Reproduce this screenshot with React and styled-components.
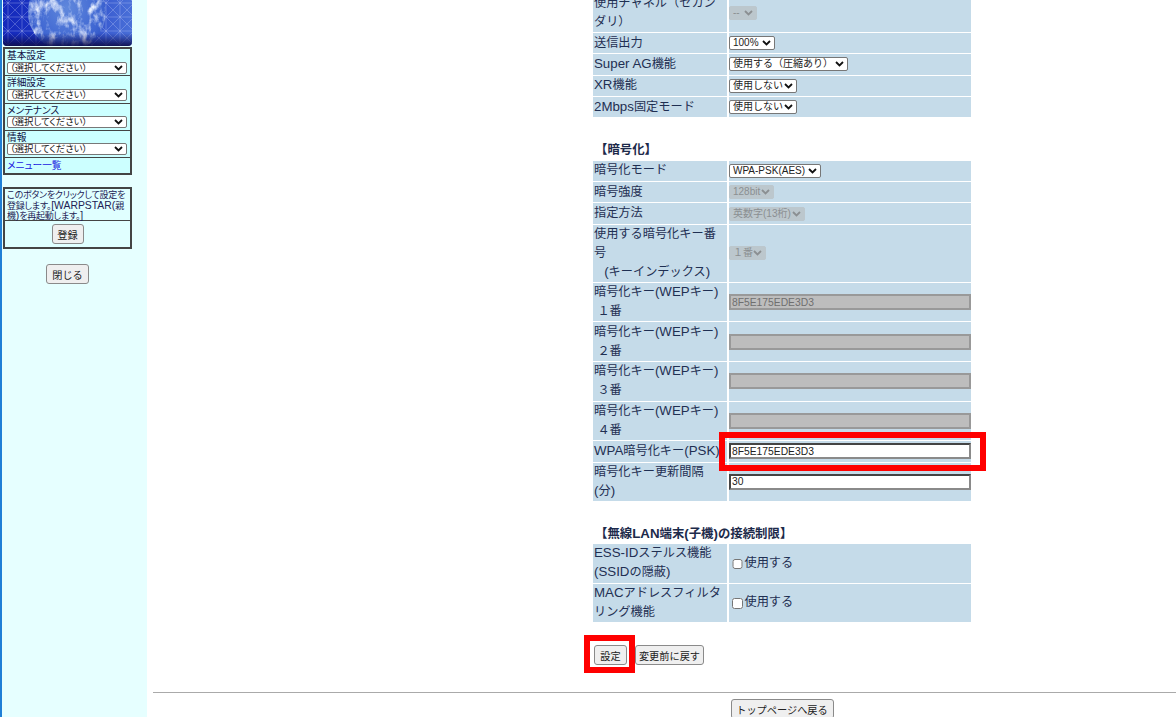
import React from "react";
import styled, { createGlobalStyle } from "styled-components";

const chevron = (c) =>
  `url("data:image/svg+xml,%3Csvg xmlns='http://www.w3.org/2000/svg' width='9' height='6' viewBox='0 0 9 6'%3E%3Cpath d='M1 1l3.5 3.5L8 1' fill='none' stroke='${c}' stroke-width='1.8'/%3E%3C/svg%3E")`;

const Global = createGlobalStyle`
  html, body { margin: 0; padding: 0; height: 717px; overflow: hidden; background: #fff; }
  #root { height: 717px; overflow: hidden; }
  * { box-sizing: border-box; }
  body { font-family: "Liberation Sans", "Noto Sans CJK JP", sans-serif; }
`;

const Page = styled.div`display: flex; height: 717px; overflow: hidden;`;
const Sidebar = styled.aside`
  width: 147px; flex: none; height: 717px; background: #e6ffff;
  border-left: 2px solid #1f7fd6; padding-left: 1px;
  display: flex; flex-direction: column; font-feature-settings: "palt";
`;
const Banner = styled.svg`display: block; width: 129px; height: 46px; flex: none;`;
const MenuBox = styled.div`
  width: 129px; margin-top: 1px; border: 2px solid #444; background: #444;
  display: flex; flex-direction: column; gap: 1px;
`;
const MenuRow = styled.div`
  background: #ccffff; height: ${p => p.$h || 26.33}px; padding: 2px 0 0 2px;
  font-size: 9.7px; line-height: 10.5px; color: #111144; white-space: nowrap;
  display: flex; flex-direction: column; align-items: flex-start;
`;
const MenuSelect = styled.select`
  appearance: none; width: 120px; height: 12px; font-size: 9.4px; padding: 0 0 0 2px; margin: 0;
  line-height: 10px; font-family: inherit; font-feature-settings: "palt"; color: #222; border: 1px solid #777; border-radius: 2px;
  background: #fff ${chevron("%23111")} no-repeat right 3px center;
`;
const MenuLink = styled.a`color: #2020e0; text-decoration: none; font-size: 9.7px; line-height: 11px;`;
const NoteBox = styled(MenuBox)`margin-top: 12px;`;
const NoteText = styled.div`
  background: #e0ffff; height: 31px; padding: 2px 0 0 2px; font-size: 9px; letter-spacing: -.25px;
  line-height: 9.5px; color: #222255; white-space: nowrap;
`;
const NoteLat = styled.span`font-size: 10.4px; letter-spacing: 0; line-height: 1;`;
const NoteAction = styled.div`
  background: #e0ffff; height: 26px; display: flex; justify-content: center; align-items: center;
`;
const CloseRow = styled.div`display: flex; justify-content: center; margin-top: 15px; width: 129px;`;

const Btn = styled.button`
  font-family: inherit; font-size: 10.2px; color: #222; height: 20px; width: ${p => p.$w}px;
  padding: 0; background: #efefef; border: 1.5px solid #8a8a8a; border-radius: 3px; flex: none; white-space: nowrap;
`;

const Main = styled.main`flex: 1; margin-left: 6px; min-width: 0;`;
const FormColumn = styled.div`margin-left: 438px; width: 382px; margin-top: -7.6px;`;
const Table = styled.table`
  border-collapse: separate; border-spacing: 2px 1px; width: 382px; table-layout: fixed;
  font-size: 12.2px; line-height: 19px; color: #1f2f52;
`;
const Label = styled.th`
  width: 134px; background: #c5dbe9; font-weight: 400; text-align: left; padding: 0 1px; vertical-align: middle;
`;
const Value = styled.td`
  background: #c5dbe9; padding: 0; height: ${p => p.$h || 20.33}px; vertical-align: middle; color: #222;
`;
const Lat = styled.span`font-size: 13.3px; line-height: 1;`;
const Sel = styled.select`
  appearance: none; display: block; width: ${p => p.$w}px; height: 14px; font-size: 10px; line-height: 12px; padding: 0 0 0 3px;
  font-family: inherit; color: #222; border: 1px solid #777; border-radius: 2px;
  background: #fff ${chevron("%23111")} no-repeat right 3px center;
  &:disabled {
    color: #8b8f92; border-color: #bcc7cd; opacity: 1;
    background: #bcc7cd ${chevron("%238b8f92")} no-repeat right 3px center;
  }
`;
const KeyInput = styled.input`
  display: block; width: 242px; height: 16px; padding: 0 1px; font-family: inherit; font-size: 10.3px;
  color: #222; background: #fff; border: 2px solid; border-color: #444 #8a8a8a #8a8a8a #444; outline: none; margin: 0;
  &:disabled { background: #bdbdbd; color: #6f6f6f; border-color: #999; opacity: 1; }
`;
const Highlight = styled.div`position: relative;`;
const RedFrame = styled.span`
  position: absolute; pointer-events: none; border: 6px solid #f00;
  left: ${p => p.$l}px; right: ${p => p.$r}px; top: ${p => p.$tp}px; bottom: ${p => p.$b}px;
`;
const Heading = styled.h3`
  margin: 23px 0 -.5px 4px; height: 19px; font-size: 12.4px; line-height: 19px; font-weight: 700; color: #1c2a4a;
`;
const CheckLabel = styled.label`
  display: flex; align-items: center; font-size: 12.2px; color: #1f2f52; margin-left: 1px;
`;
const Check = styled.input`
  width: 10.5px; height: 10.5px; margin: 1px 2px 0 2px;
`;
const Actions = styled.div`display: flex; margin: 22px 0 0 3px; gap: 8px; align-items: flex-start;`;
const Rule = styled.hr`border: 0; border-top: 1px solid #aaa; margin: 27px 0 0; height: 0;`;
const BackRow = styled.div`display: flex; justify-content: center; padding-left: 235px; margin-top: 6px;`;

const Globe = () => (
  <Banner viewBox="0 0 129 46" preserveAspectRatio="none">
    <defs>
      <linearGradient id="bg" x1="0" x2="1" y1="0" y2="0">
        <stop offset="0" stopColor="#1428bc" />
        <stop offset=".45" stopColor="#1f3cc4" />
        <stop offset="1" stopColor="#4a70d8" />
      </linearGradient>
      <linearGradient id="fade" x1="0" x2="0" y1="0" y2="1">
        <stop offset=".72" stopColor="#101060" stopOpacity="0" />
        <stop offset="1" stopColor="#0a0a48" stopOpacity=".92" />
      </linearGradient>
      <radialGradient id="earth" cx=".5" cy=".45" r=".55">
        <stop offset="0" stopColor="#6088dc" />
        <stop offset=".8" stopColor="#3f66d2" />
        <stop offset="1" stopColor="#3358c8" />
      </radialGradient>
      <pattern id="net" width="14" height="14" patternUnits="userSpaceOnUse" x="-2" y="-4">
        <path d="M0 0L14 14M14 0L0 14M7 0V14M0 7H14" stroke="#d8e2ff" strokeOpacity=".38" strokeWidth=".7" fill="none" />
      </pattern>
      <filter id="clouds" x="0" y="0" width="100%" height="100%">
        <feTurbulence type="fractalNoise" baseFrequency=".13 .08" numOctaves="4" seed="11" />
        <feColorMatrix type="matrix" values="0 0 0 0 .8  0 0 0 0 .86  0 0 0 0 1  2 2 0 0 -1.85" />
      </filter>
      <clipPath id="round"><path d="M0 0H129V42Q129 46 125 46H4Q0 46 0 42Z" /></clipPath>
      <clipPath id="disc"><circle cx="64" cy="12" r="39" /></clipPath>
    </defs>
    <g clipPath="url(#round)">
      <rect width="129" height="46" fill="url(#bg)" />
      <rect width="129" height="46" fill="url(#net)" />
      <circle cx="64" cy="12" r="39" fill="url(#earth)" />
      <g clipPath="url(#disc)"><rect width="129" height="46" filter="url(#clouds)" /></g>
      <rect width="129" height="46" fill="url(#fade)" />
    </g>
  </Banner>
);

const menus = ["基本設定", "詳細設定", "メンテナンス", "情報"];
const keys = ["１番", "２番", "３番", "４番"];

export default function App() {
  return (
    <Page>
      <Global />
      <Sidebar>
        <Globe />
        <MenuBox>
          {menus.map(m => (
            <MenuRow key={m}>
              {m}
              <MenuSelect><option>（選択してください）</option></MenuSelect>
            </MenuRow>
          ))}
          <MenuRow $h={15}><MenuLink href="#">メニュー一覧</MenuLink></MenuRow>
        </MenuBox>
        <NoteBox>
          <NoteText>このボタンをクリックして設定を<br />登録します。<NoteLat>[WARPSTAR(</NoteLat>親<br />機<NoteLat>)</NoteLat>を再起動します。<NoteLat>]</NoteLat></NoteText>
          <NoteAction><Btn $w={32}>登録</Btn></NoteAction>
        </NoteBox>
        <CloseRow><Btn $w={43}>閉じる</Btn></CloseRow>
      </Sidebar>
      <Main>
        <FormColumn>
          <Table>
            <tbody>
              <tr><Label>使用チャネル（セカンダリ）</Label><Value $h={38.6}><Sel $w={28} disabled><option>--</option></Sel></Value></tr>
              <tr><Label>送信出力</Label><Value><Sel $w={46}><option>100%</option></Sel></Value></tr>
              <tr><Label><Lat>Super AG</Lat>機能</Label><Value><Sel $w={119}><option>使用する（圧縮あり）</option></Sel></Value></tr>
              <tr><Label><Lat>XR</Lat>機能</Label><Value><Sel $w={68}><option>使用しない</option></Sel></Value></tr>
              <tr><Label><Lat>2Mbps</Lat>固定モード</Label><Value><Sel $w={68}><option>使用しない</option></Sel></Value></tr>
            </tbody>
          </Table>
          <Heading>【暗号化】</Heading>
          <Table>
            <tbody>
              <tr><Label>暗号化モード</Label><Value><Sel $w={92}><option>WPA-PSK(AES)</option></Sel></Value></tr>
              <tr><Label>暗号強度</Label><Value><Sel $w={45} disabled><option>128bit</option></Sel></Value></tr>
              <tr><Label>指定方法</Label><Value><Sel $w={76} disabled><option>英数字(13桁)</option></Sel></Value></tr>
              <tr><Label>使用する暗号化キー番号<br />&nbsp;&nbsp;&nbsp;<Lat>(</Lat>キーインデックス<Lat>)</Lat></Label><Value><Sel $w={37} disabled><option>１番</option></Sel></Value></tr>
              {keys.map((k, i) => (
                <tr key={k}>
                  <Label>暗号化キー<Lat>(WEP</Lat>キー<Lat>)</Lat><br />&nbsp;{k}</Label>
                  <Value $h={38.6}><KeyInput disabled defaultValue={i === 0 ? "8F5E175EDE3D3" : ""} /></Value>
                </tr>
              ))}
              <tr>
                <Label><Lat>WPA</Lat>暗号化キー<Lat>(PSK)</Lat></Label>
                <Value>
                  <Highlight>
                    <KeyInput defaultValue="8F5E175EDE3D3" />
                    <RedFrame $l={-10} $r={-15} $tp={-11} $b={-12} />
                  </Highlight>
                </Value>
              </tr>
              <tr><Label>暗号化キー更新間隔<br /><Lat>(</Lat>分<Lat>)</Lat></Label><Value><KeyInput defaultValue="30" /></Value></tr>
            </tbody>
          </Table>
          <Heading>【無線<Lat>LAN</Lat>端末<Lat>(</Lat>子機<Lat>)</Lat>の接続制限】</Heading>
          <Table>
            <tbody>
              <tr><Label><Lat>ESS-ID</Lat>ステルス機能<Lat>(SSID</Lat>の隠蔽<Lat>)</Lat></Label><Value $h={38.5}><CheckLabel><Check type="checkbox" />使用する</CheckLabel></Value></tr>
              <tr><Label><Lat>MAC</Lat>アドレスフィルタリング機能</Label><Value $h={38.5}><CheckLabel><Check type="checkbox" />使用する</CheckLabel></Value></tr>
            </tbody>
          </Table>
          <Actions>
            <Highlight>
              <Btn $w={33}>設定</Btn>
              <RedFrame $l={-10} $r={-8} $tp={-10} $b={-8} />
            </Highlight>
            <Btn $w={69}>変更前に戻す</Btn>
          </Actions>
        </FormColumn>
        <Rule />
        <BackRow><Btn $w={103}>トップページへ戻る</Btn></BackRow>
      </Main>
    </Page>
  );
}
